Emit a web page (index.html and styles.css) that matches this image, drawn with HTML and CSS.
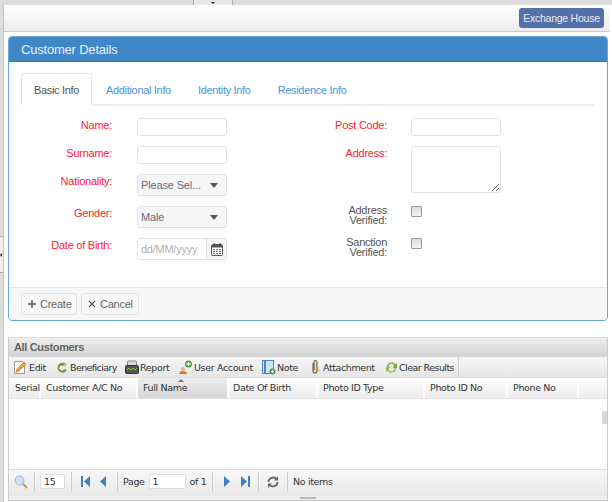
FILE: index.html
```html
<!DOCTYPE html>
<html>
<head>
<meta charset="utf-8">
<title>Customer Details</title>
<link rel="stylesheet" href="styles.css">
</head>
<body>
<div class="strip"><div class="handle"><span class="handle-arrow"></span></div></div>
<div class="shell">
  <div class="rail"><div class="rail-handle"><span class="rail-arrow"></span></div></div>
  <main class="main">
    <div class="topbar"><button class="house">Exchange House</button></div>
    <section class="panel">
      <h1 class="panel-title">Customer Details</h1>
      <div class="panel-body">
        <nav class="tabs">
          <a class="tab active">Basic Info</a>
          <a class="tab">Additional Info</a>
          <a class="tab">Identity Info</a>
          <a class="tab">Residence Info</a>
        </nav>
        <div class="form">
          <div class="col">
            <div class="row r-input"><label class="req">Name:</label><input class="field"></div>
            <div class="row r-input"><label class="req">Surname:</label><input class="field"></div>
            <div class="row r-select"><label class="req">Nationality:</label><div class="select"><span>Please Sel...</span><i class="caret"></i></div></div>
            <div class="row r-select"><label class="req">Gender:</label><div class="select"><span>Male</span><i class="caret"></i></div></div>
            <div class="row r-select last"><label class="req">Date of Birth:</label>
              <div class="date"><span class="ph">dd/MM/yyyy</span><span class="cal">
                <svg width="12" height="13" viewBox="0 0 12 13"><rect x="0.5" y="1.5" width="11" height="11" rx="1" fill="#fff" stroke="#555"/><rect x="1" y="2" width="10" height="2.5" fill="#555"/><rect x="2.5" y="0" width="1.2" height="2.5" fill="#555"/><rect x="8.3" y="0" width="1.2" height="2.5" fill="#555"/><path d="M2 6h2v1H2zM5 6h2v1H5zM8 6h2v1H8zM2 8h2v1H2zM5 8h2v1H5zM8 8h2v1H8zM2 10h2v1H2zM5 10h2v1H5zM8 10h2v1H8z" fill="#666"/></svg>
              </span></div></div>
          </div>
          <div class="col">
            <div class="row r-input"><label class="req">Post Code:</label><input class="field"></div>
            <div class="row r-area"><label class="req">Address:</label><textarea class="area"></textarea></div>
            <div class="row r-check"><label class="two">Address Verified:</label><span class="check"></span></div>
            <div class="row r-check last"><label class="two">Sanction Verified:</label><span class="check"></span></div>
          </div>
        </div>
      </div>
      <footer class="panel-foot">
        <button class="btn btn-create"><svg width="8" height="8" viewBox="0 0 8 8"><path d="M4 0v8M0 4h8" stroke="#555" stroke-width="1.4"/></svg>Create</button>
        <button class="btn btn-cancel"><svg width="8" height="8" viewBox="0 0 8 8"><path d="M1 1l6 6M7 1l-6 6" stroke="#555" stroke-width="1.1"/></svg>Cancel</button>
      </footer>
    </section>
    <section class="grid">
      <h2 class="grid-title">All Customers</h2>
      <div class="tools">
        <span class="tool t1"><svg width="14" height="15" viewBox="0 0 14 15"><path d="M1.5 1.5h8l2 2v10h-10z" fill="#fff" stroke="#999"/><path d="M3 12l1-3 7-7 2 2-7 7z" fill="#f0a030" stroke="#b87010" stroke-width=".6"/></svg>Edit</span>
        <span class="tool t2"><svg width="13" height="13" viewBox="0 0 13 13"><path d="M11 3A5 5 0 1 0 12 9L9 8A2.400 2.400 0 1 1 8 5z" fill="#6d9a2c"/><path d="M8 1l4 2-3 3z" fill="#a5c760"/></svg>Beneficiary</span>
        <span class="tool t3"><svg width="14" height="14" viewBox="0 0 14 14"><rect x="2.500" y="1" width="9" height="5" rx="1" fill="#ddd" stroke="#888"/><rect x="0.500" y="5.500" width="13" height="8" rx="1" fill="#555" stroke="#333"/><path d="M2 10l2-2 2 2 2-2 2 2 2-2" stroke="#6fd040" fill="none"/></svg>Report</span>
        <span class="tool t4"><svg width="15" height="15" viewBox="0 0 15 15"><circle cx="5" cy="9" r="2" fill="#e8b080"/><path d="M1 14c0-2 2-3 4-3s4 1 4 3z" fill="#e07030"/><circle cx="10.500" cy="4" r="3.500" fill="#3ea23e"/><path d="M10.500 2v4M8.500 4h4" stroke="#fff" stroke-width="1.300"/></svg>User Account</span>
        <span class="tool t5"><svg width="14" height="15" viewBox="0 0 14 15"><rect x="0.500" y="0.500" width="11" height="13" fill="#cfe2f5" stroke="#4e88c0"/><rect x="2" y="0.500" width="2" height="13" fill="#4e88c0"/><circle cx="10.500" cy="11.500" r="3" fill="#3ea23e"/><path d="M10.500 10v3M9 11.500h3" stroke="#fff"/></svg>Note</span>
        <span class="tool t6"><svg width="14" height="16" viewBox="0 0 14 16"><path d="M7 1l6 12H4z" fill="#f8d590"/><path d="M5 4v8a2 2 0 0 0 4 0V3a1.500 1.500 0 0 0-3 0v8" fill="none" stroke="#666" stroke-width="1.100"/></svg>Attachment</span>
        <span class="tool t7"><svg width="13" height="13" viewBox="0 0 14 13"><path d="M2 6a5 5 0 0 1 9-3l2-1v5H8l2-2a3 3 0 0 0-6 1z" fill="#6cae2e"/><path d="M12 7a5 5 0 0 1-9 3l-2 1V6h5L4 8a3 3 0 0 0 6-1z" fill="#8cc64a"/></svg>Clear Results</span>
      </div>
      <div class="heads">
        <span class="h h1">Serial</span>
        <span class="h h2">Customer A/C No</span>
        <span class="h h3 sorted">Full Name<i class="sort"></i></span>
        <span class="h h4">Date Of Birth</span>
        <span class="h h5">Photo ID Type</span>
        <span class="h h6">Photo ID No</span>
        <span class="h h7">Phone No</span>
        <span class="h h8"></span>
      </div>
      <div class="rows"><div class="scroll-thumb"></div></div>
      <div class="pager">
        <span class="pg pg-search"><svg width="14" height="14" viewBox="0 0 14 14"><circle cx="5.500" cy="5.500" r="4.500" fill="#cfe3f5" stroke="#8fb4d8"/><path d="M9 9l4 4" stroke="#c89b50" stroke-width="2"/></svg></span>
        <span class="pg pg-size"><span class="num">15</span></span>
        <span class="pg pg-nav nav-a"><svg width="9" height="11" viewBox="0 0 9 11"><rect x="0" y="0" width="2" height="11" fill="#3d80c8"/><path d="M9 0v11L3 5.500z" fill="#3d80c8"/></svg><svg width="6" height="11" viewBox="0 0 6 11"><path d="M6 0v11L0 5.500z" fill="#3d80c8"/></svg></span>
        <span class="pg pg-page">Page<span class="num wide">1</span>of 1</span>
        <span class="pg pg-nav nav-b"><svg width="6" height="11" viewBox="0 0 6 11"><path d="M0 0v11l6-5.500z" fill="#3d80c8"/></svg><svg width="9" height="11" viewBox="0 0 9 11"><rect x="7" y="0" width="2" height="11" fill="#3d80c8"/><path d="M0 0v11l6-5.500z" fill="#3d80c8"/></svg></span>
        <span class="pg pg-refresh"><svg width="12" height="12" viewBox="0 0 12 12"><path d="M1.500 6a4.500 4.500 0 0 1 8-2.800M10.500 6a4.500 4.500 0 0 1-8 2.800" fill="none" stroke="#666" stroke-width="1.800"/><path d="M11 0v4.500H7zM1 12V7.500h4z" fill="#666"/></svg></span>
        <span class="pg pg-info">No items</span>
      </div>
      <div class="grid-foot"><span class="grip"></span></div>
    </section>
  </main>
</div>
</body>
</html>
```
FILE: styles.css
```css
* { box-sizing: border-box; }
html, body { margin: 0; height: 502px; overflow: hidden; }
body { background: #fff; font-family: "Liberation Sans", Arial, sans-serif; font-size: 11px; letter-spacing: -0.25px; color: #555; }

.strip { height: 5px; background: #dcdcdc; display: flex; justify-content: center; padding-right: 187px; }
.handle { width: 40px; height: 5px; background: #e8e8e8; border-left: 1px solid #aaa; border-right: 1px solid #aaa; display: flex; justify-content: center; }
.handle-arrow { width: 0; height: 0; margin-top: 2px; border: 2px solid transparent; border-top-color: #222; border-bottom: 0; }

.shell { display: flex; height: 497px; }
.rail { width: 4px; background: #dcdcdc; border-right: 1px solid #c4c4c4; padding-top: 231px; }
.rail-handle { height: 37px; width: 3px; background: #eee; border-top: 1px solid #aaa; border-bottom: 1px solid #aaa; display: flex; align-items: center; }
.rail-arrow { width: 0; height: 0; border: 2px solid transparent; border-right: 2px solid #222; border-left: 0; }
.main { flex: 1; min-width: 0; padding-right: 2px; }

.topbar { height: 27px; background: linear-gradient(#fff, #ececee); border-bottom: 1px solid #ccc; display: flex; justify-content: flex-end; align-items: flex-start; padding: 3px 6px 0 0; }
.house { width: 85px; height: 20px; background: #5470a8; color: #e6ebf5; border: 0; border-radius: 3px; font: 10.5px "Liberation Sans", Arial, sans-serif; padding: 0; letter-spacing: -0.25px; white-space: nowrap; }

.panel { margin: 4px 0 0 4px; width: 600px; height: 285px; border: 1px solid #6ea6d9; border-radius: 4px; display: flex; flex-direction: column; overflow: hidden; background: #fff; }
.panel-title { margin: 0; height: 25px; background: #3f87c7; color: #e8f1fa; font-size: 13px; letter-spacing: -0.2px; font-weight: normal; line-height: 25px; padding-left: 12px; border-bottom: 1px solid #2f79bd; }
.panel-body { flex: 1; padding: 11px 12px 0; }

.tabs { display: flex; height: 33px; border-bottom: 2px solid #eee; width: 574px; gap: 27px; }
.tab { height: 33px; line-height: 34px; color: #4a94d8; letter-spacing: -0.32px; }
.tab.active { width: 71px; margin-right: -13px; text-align: center; color: #555; background: #fff; border: 1px solid #e4e4e4; border-bottom: 2px solid #fff; border-radius: 3px 3px 0 0; line-height: 32px; }

.form { display: grid; grid-template-columns: 275px 275px; padding-top: 12px; }
.col { display: flex; flex-direction: column; }
.row { display: flex; align-items: flex-start; }
.row label { width: 91px; flex: none; text-align: right; margin-right: 24px; line-height: 14px; }
.req { color: #ff2030; }
.r-input { height: 28px; }
.r-select { height: 32px; }
.r-area { height: 60px; }
.r-check { height: 32px; }
.field { width: 90px; height: 18px; border: 1px solid #e2e2e2; border-radius: 3px; padding: 0; margin: 0; background: #fff; }
.col:first-child .row label { margin-right: 25px; }
.area { display: block; width: 90px; height: 47px; border: 1px solid #e2e2e2; border-radius: 3px; padding: 0; margin: 0; background: #fff; }
.select { width: 90px; height: 22px; border: 1px solid #e2e2e2; border-radius: 3px; background: #f6f6f6; display: flex; justify-content: space-between; align-items: center; padding: 0 8px 0 3px; color: #666a80; line-height: 20px; letter-spacing: -0.15px; }
.caret { width: 0; height: 0; border: 4px solid transparent; border-top: 5px solid #555; border-bottom: 0; }
.date { width: 90px; height: 22px; border: 1px solid #e2e2e2; border-radius: 3px; display: flex; }
.ph { flex: 1; padding-left: 3px; line-height: 20px; color: #b0b0b0; }
.cal { width: 20px; background: #f6f6f6; border-left: 1px solid #e2e2e2; display: flex; align-items: center; justify-content: center; }
.row .two { color: #555; padding-left: 40px; line-height: 10px; margin-top: -1px; }
.check { width: 11px; height: 11px; border: 1px solid #999; border-radius: 1px; background: linear-gradient(#ddd, #f4f4f4); }

.panel-foot { height: 33px; background: #f7f7f7; border-top: 1px solid #e4e4e4; padding: 5px 12px; display: flex; gap: 4px; align-items: flex-start; }
.btn { height: 22px; background: #f8f8f8; border: 1px solid #e2e2e2; border-radius: 3px; color: #666; font: 11px "Liberation Sans", Arial, sans-serif; letter-spacing: -0.25px; padding: 0 0 0 6px; display: flex; align-items: center; gap: 4px; }
.btn-create { width: 56px; }
.btn-cancel { width: 58px; }

.grid { margin: 16px 0 0 4px; width: 600px; height: 164px; border-left: 1px solid #ccc; border-right: 1px solid #ccc; font-family: "DejaVu Sans", Verdana, sans-serif; font-size: 9.5px; letter-spacing: -0.35px; color: #333; display: flex; flex-direction: column; }
.grid-title { margin: 0; height: 20px; background: linear-gradient(#eee, #d2d2d2); border-top: 1px solid #ddd; font: bold 11px "Liberation Sans", Arial, sans-serif; letter-spacing: -0.35px; line-height: 19px; color: #666; padding-left: 5px; }
.tools { height: 21px; background: linear-gradient(#f6f6f6, #e6e6e6); border-bottom: 1px solid #ddd; display: flex; align-items: center; padding-left: 4px; }
.tool { display: flex; align-items: center; gap: 1px; white-space: nowrap; flex: none; height: 20px; }
.t1 { width: 42px; gap: 2px; }
.t2 { width: 70px; gap: 2px; letter-spacing: -0.6px; }
.t3 { width: 53px; }
.t4 { width: 84px; }
.t5 { width: 46px; }
.t6 { width: 77px; letter-spacing: -0.4px; }
.t7 { width: 74px; letter-spacing: -0.55px; border-right: 1px solid #ccc; }
.heads { height: 21px; display: flex; background: linear-gradient(#fff, #ececec); border-bottom: 1px solid #e4e4e4; }
.h { height: 20px; line-height: 20px; padding-left: 5px; border-right: 2px solid #fff; white-space: nowrap; position: relative; }
.h1 { width: 32px; padding-left: 6px; }
.h2 { width: 97px; }
.h3 { width: 91px; }
.h4 { width: 89px; padding-left: 4px; }
.h5 { width: 107px; }
.h6 { width: 83px; }
.h7 { width: 71px; }
.h8 { flex: 1; border-right: 0; }
.sorted { background: linear-gradient(#eee, #d6d6d6); }
.sort { position: absolute; left: 40px; top: 1px; width: 0; height: 0; border: 3px solid transparent; border-bottom-color: #777; border-top: 0; }
.rows { height: 70px; background: #fff; position: relative; }
.scroll-thumb { position: absolute; right: 0; top: 12px; width: 5px; height: 13px; background: #d8d8d8; }
.pager { height: 27px; background: linear-gradient(#f7f7f7, #e8e8e8); border-top: 1px solid #ddd; display: flex; align-items: center; padding: 0 0 3px 5px; }
.pg { height: 20px; display: flex; align-items: center; border-right: 1px solid #ccc; white-space: nowrap; flex: none; }
.pg-search { width: 21px; }
.pg-size { width: 37px; padding-left: 5px; }
.pg-nav { gap: 10px; }
.nav-a { width: 46px; padding-left: 9px; }
.nav-b { width: 46px; padding-left: 11px; gap: 11px; }
.pg-page { width: 95px; padding-left: 5px; }
.pg-refresh { width: 29px; padding-left: 8px; }
.pg-info { border: 0; padding-left: 5px; }
.num { display: inline-block; width: 25px; height: 15px; background: #fff; border: 1px solid #ddd; border-radius: 1px; line-height: 13px; padding-left: 3px; margin: 0; }
.wide { width: 37px; margin: 0 4px; }
.grid-foot { height: 5px; background: #eee; border-bottom: 1px solid #ccc; display: flex; justify-content: center; }
.grip { width: 16px; height: 2px; background: #bbb; margin-top: 1px; }
```
